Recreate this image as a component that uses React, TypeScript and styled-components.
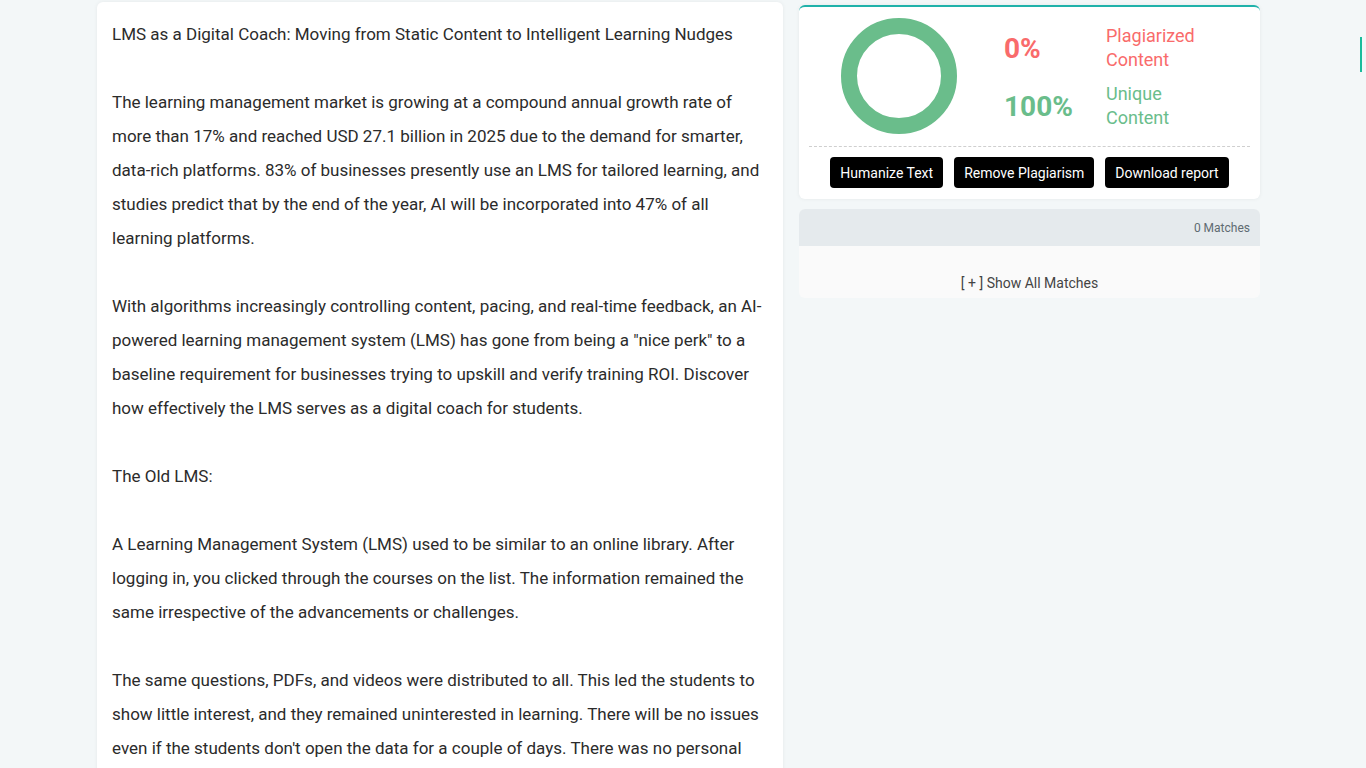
import React from "react";
import styled, { createGlobalStyle } from "styled-components";

const GlobalStyle = createGlobalStyle`
  html, body {
    margin: 0;
    padding: 0;
    background: #f3f7f8;
    font-family: Roboto, "Liberation Sans", Arial, sans-serif;
    color: #212529;
  }
  * { box-sizing: border-box; }
`;

const colors = {
  red: "#f96b6b",
  green: "#6abd8b",
  teal: "#20b2aa",
  text: "#2b2b2b",
};

const Page = styled.div`
  display: flex;
  align-items: flex-start;
  gap: 16px;
  padding: 2px 0 0 97px;
`;

const ArticleCard = styled.div`
  width: 686px;
  min-height: 800px;
  background: #fff;
  border-radius: 6px;
  box-shadow: 0 0 4px rgba(0, 0, 0, 0.06);
  padding: 15px 15px 15px;
`;

const Paragraph = styled.p`
  margin: 0 0 34px;
  font-size: 17px;
  line-height: 34px;
  color: ${colors.text};
`;

const Side = styled.div`
  width: 461px;
  margin-top: 3px;
  display: flex;
  flex-direction: column;
  gap: 10px;
`;

const ScoreCard = styled.div`
  background: #fff;
  border-top: 2px solid ${colors.teal};
  border-radius: 6px;
  box-shadow: 0 0 4px rgba(0, 0, 0, 0.06);
  padding: 11px 10px 11px;
`;

const ScoreRow = styled.div`
  display: flex;
  align-items: center;
  padding-left: 32px;
`;

const Stats = styled.div`
  margin: 2px 0 0 47px;
  display: grid;
  grid-template-columns: 102px auto;
  row-gap: 10px;
  align-items: center;
`;

const Percent = styled.div<{ $tone: string }>`
  padding-top: 1px;
  font-size: 28px;
  font-weight: 700;
  color: ${(p) => p.$tone};
`;

const Label = styled.div<{ $tone: string }>`
  font-size: 18px;
  line-height: 24px;
  color: ${(p) => p.$tone};
`;

const Divider = styled.div`
  margin-top: 12px;
  border-top: 1px dashed #cfcfcf;
`;

const Actions = styled.div`
  display: flex;
  justify-content: center;
  gap: 11px;
  margin-top: 10px;
`;

const ActionButton = styled.button`
  background: #000;
  color: #fff;
  border: none;
  border-radius: 4px;
  height: 31px;
  padding: 0 10px;
  font-family: inherit;
  font-size: 14px;
  cursor: pointer;
`;

const MatchesCard = styled.div`
  border-radius: 6px;
  overflow: hidden;
  background: #fafafa;
`;

const MatchesHeader = styled.div`
  height: 37px;
  background: #e5eaed;
  display: flex;
  align-items: center;
  justify-content: flex-end;
  padding-right: 10px;
  font-size: 12px;
  color: #5f6b72;
`;

const MatchesBody = styled.div`
  padding: 27px 0 5px;
  text-align: center;
  font-size: 14px;
  line-height: 20px;
  color: #444;
`;

const EdgeMarker = styled.div`
  position: fixed;
  right: 4px;
  top: 37px;
  width: 2px;
  height: 35px;
  background: #1abc9c;
`;

const Donut = () => (
  <svg width="116" height="116" viewBox="0 0 116 116">
    <circle cx="58" cy="58" r="50" fill="none" stroke={colors.green} strokeWidth="16" />
  </svg>
);

const paragraphs = [
  "LMS as a Digital Coach: Moving from Static Content to Intelligent Learning Nudges",
  "The learning management market is growing at a compound annual growth rate of more than 17% and reached USD 27.1 billion in 2025 due to the demand for smarter, data-rich platforms. 83% of businesses presently use an LMS for tailored learning, and studies predict that by the end of the year, AI will be incorporated into 47% of all learning platforms.",
  "With algorithms increasingly controlling content, pacing, and real-time feedback, an AI-powered learning management system (LMS) has gone from being a \"nice perk\" to a baseline requirement for businesses trying to upskill and verify training ROI. Discover how effectively the LMS serves as a digital coach for students.",
  "The Old LMS:",
  "A Learning Management System (LMS) used to be similar to an online library. After logging in, you clicked through the courses on the list. The information remained the same irrespective of the advancements or challenges.",
  "The same questions, PDFs, and videos were distributed to all. This led the students to show little interest, and they remained uninterested in learning. There will be no issues even if the students don't open the data for a couple of days. There was no personal guidance and no reminder to bring them back.",
];

const App: React.FC = () => {
  return (
    <>
      <GlobalStyle />
      <Page>
        <ArticleCard>
          {paragraphs.map((text, i) => (
            <Paragraph key={i}>{text}</Paragraph>
          ))}
        </ArticleCard>
        <Side>
          <ScoreCard>
            <ScoreRow>
              <Donut />
              <Stats>
                <Percent $tone={colors.red}>0%</Percent>
                <Label $tone={colors.red}>
                  Plagiarized
                  <br />
                  Content
                </Label>
                <Percent $tone={colors.green}>100%</Percent>
                <Label $tone={colors.green}>
                  Unique
                  <br />
                  Content
                </Label>
              </Stats>
            </ScoreRow>
            <Divider />
            <Actions>
              <ActionButton>Humanize Text</ActionButton>
              <ActionButton>Remove Plagiarism</ActionButton>
              <ActionButton>Download report</ActionButton>
            </Actions>
          </ScoreCard>
          <MatchesCard>
            <MatchesHeader>0 Matches</MatchesHeader>
            <MatchesBody>[ + ] Show All Matches</MatchesBody>
          </MatchesCard>
        </Side>
      </Page>
      <EdgeMarker />
    </>
  );
};

export default App;
